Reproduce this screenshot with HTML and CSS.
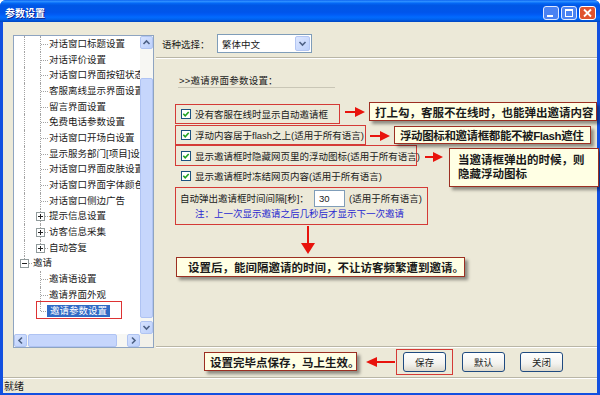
FILE: index.html
```html
<!DOCTYPE html>
<html lang="zh-CN">
<head>
    <meta charset="UTF-8">
    <title>参数设置</title>
    <link rel="stylesheet" href="styles.css">
</head>
<body>
    <div class="window">
        <div class="titlebar">
            <span class="title">参数设置</span>
            <div class="caption-btns">
                <svg width="16" height="14" viewBox="0 0 16 14"><rect x="0.5" y="0.5" width="15" height="13" rx="2.5" fill="#4a82f2" stroke="#dfe8ff"/><rect x="4" y="9" width="6" height="2" fill="#fff"/></svg>
                <svg width="16" height="14" viewBox="0 0 16 14"><rect x="0.5" y="0.5" width="15" height="13" rx="2.5" fill="#4a82f2" stroke="#dfe8ff"/><rect x="4.5" y="3.5" width="7" height="7" fill="none" stroke="#fff"/><rect x="4" y="3" width="8" height="2" fill="#fff"/></svg>
                <svg width="17" height="14" viewBox="0 0 17 14"><rect x="0.5" y="0.5" width="16" height="13" rx="2.5" fill="#e0532f" stroke="#fff"/><path d="M5 3.5 L12 10.5 M12 3.5 L5 10.5" stroke="#fff" stroke-width="1.8"/></svg>
            </div>
        </div>

        <div class="client">
            <div class="main">
                <!-- left tree -->
                <div class="tree-panel">
                    <div class="tree-view">
                        <div class="row"><span class="g pipe"></span><span class="g tee"></span><span class="label">对话窗口标题设置</span></div>
                        <div class="row"><span class="g pipe"></span><span class="g tee"></span><span class="label">对话评价设置</span></div>
                        <div class="row"><span class="g pipe"></span><span class="g tee"></span><span class="label">对话窗口界面按钮状态</span></div>
                        <div class="row"><span class="g pipe"></span><span class="g tee"></span><span class="label">客服离线显示界面设置</span></div>
                        <div class="row"><span class="g pipe"></span><span class="g tee"></span><span class="label">留言界面设置</span></div>
                        <div class="row"><span class="g pipe"></span><span class="g tee"></span><span class="label">免费电话参数设置</span></div>
                        <div class="row"><span class="g pipe"></span><span class="g tee"></span><span class="label">对话窗口开场白设置</span></div>
                        <div class="row"><span class="g pipe"></span><span class="g tee"></span><span class="label">显示服务部门[项目]设置</span></div>
                        <div class="row"><span class="g pipe"></span><span class="g tee"></span><span class="label">对话窗口界面皮肤设置</span></div>
                        <div class="row"><span class="g pipe"></span><span class="g tee"></span><span class="label">对话窗口界面字体颜色</span></div>
                        <div class="row"><span class="g pipe"></span><span class="g tee"></span><span class="label">对话窗口侧边广告</span></div>
                        <div class="row"><span class="g pipe"></span><span class="g tee"><span class="exp plus"></span></span><span class="label">提示信息设置</span></div>
                        <div class="row"><span class="g pipe"></span><span class="g tee"><span class="exp plus"></span></span><span class="label">访客信息采集</span></div>
                        <div class="row"><span class="g pipe"></span><span class="g elbow"><span class="exp plus"></span></span><span class="label">自动答复</span></div>
                        <div class="row"><span class="g elbow"><span class="exp"></span></span><span class="label">邀请</span></div>
                        <div class="row"><span class="g"></span><span class="g tee"></span><span class="label">邀请语设置</span></div>
                        <div class="row"><span class="g"></span><span class="g tee"></span><span class="label">邀请界面外观</span></div>
                        <div class="row"><span class="g"></span><span class="g elbow"></span><span class="label selected">邀请参数设置</span></div>
                    </div>
                    <div class="vscroll">
                        <span class="sb-btn"><svg width="9" height="9" viewBox="0 0 9 9"><path d="M1.5 6 L4.5 3 L7.5 6" fill="none" stroke="#4d6185" stroke-width="1.6"/></svg></span>
                        <div class="v-track"><span class="thumb"></span></div>
                        <span class="sb-btn"><svg width="9" height="9" viewBox="0 0 9 9"><path d="M1.5 3 L4.5 6 L7.5 3" fill="none" stroke="#4d6185" stroke-width="1.6"/></svg></span>
                    </div>
                    <div class="hscroll">
                        <span class="sb-btn"><svg width="9" height="9" viewBox="0 0 9 9"><path d="M6 1.5 L3 4.5 L6 7.5" fill="none" stroke="#4d6185" stroke-width="1.6"/></svg></span>
                        <div class="h-track"><span class="thumb"></span></div>
                        <span class="sb-btn"><svg width="9" height="9" viewBox="0 0 9 9"><path d="M3 1.5 L6 4.5 L3 7.5" fill="none" stroke="#4d6185" stroke-width="1.6"/></svg></span>
                    </div>
                    <div class="sb-corner"></div>
                </div>

                <!-- right settings -->
                <div class="settings">
                    <div class="lang-row">
                        <span class="lang-label">语种选择：</span>
                        <div class="select">
                            <span>繁体中文</span>
                            <span class="drop"><svg width="9" height="9" viewBox="0 0 9 9"><path d="M1.5 3 L4.5 6 L7.5 3" fill="none" stroke="#4d6185" stroke-width="1.6"/></svg></span>
                        </div>
                    </div>

                    <div class="panel-body">
                        <div class="section-title">&gt;&gt;邀请界面参数设置：</div>
                        <div class="options">
                            <div class="opt marked w1">
                                <svg class="check" viewBox="0 0 10 10"><rect x="0.5" y="0.5" width="9" height="9" fill="#fff" stroke="#1c5180"/><path d="M2.3 4.8 L4.2 6.8 L7.7 3" fill="none" stroke="#21a121" stroke-width="1.6"/></svg>
                                <span>没有客服在线时显示自动邀请框</span>
                            </div>
                            <div class="opt marked w2">
                                <svg class="check" viewBox="0 0 10 10"><rect x="0.5" y="0.5" width="9" height="9" fill="#fff" stroke="#1c5180"/><path d="M2.3 4.8 L4.2 6.8 L7.7 3" fill="none" stroke="#21a121" stroke-width="1.6"/></svg>
                                <span>浮动内容居于flash之上(适用于所有语言)</span>
                            </div>
                            <div class="opt marked w3">
                                <svg class="check" viewBox="0 0 10 10"><rect x="0.5" y="0.5" width="9" height="9" fill="#fff" stroke="#1c5180"/><path d="M2.3 4.8 L4.2 6.8 L7.7 3" fill="none" stroke="#21a121" stroke-width="1.6"/></svg>
                                <span>显示邀请框时隐藏网页里的浮动图标(适用于所有语言)</span>
                            </div>
                            <div class="opt">
                                <svg class="check" viewBox="0 0 10 10"><rect x="0.5" y="0.5" width="9" height="9" fill="#fff" stroke="#1c5180"/><path d="M2.3 4.8 L4.2 6.8 L7.7 3" fill="none" stroke="#21a121" stroke-width="1.6"/></svg>
                                <span>显示邀请框时冻结网页内容(适用于所有语言)</span>
                            </div>
                            <div class="opt marked interval">
                                <div class="interval-line">
                                    <span class="interval-label">自动弹出邀请框时间间隔[秒]：</span>
                                    <span class="num-input">30</span>
                                    <span class="hint">(适用于所有语言)</span>
                                </div>
                                <div class="note">注：上一次显示邀请之后几秒后才显示下一次邀请</div>
                            </div>
                        </div>
                    </div>

                    <div class="button-bar">
                        <span class="btn-mark"><button class="btn">保存</button></span>
                        <button class="btn btn-default">默认</button>
                        <button class="btn btn-close">关闭</button>
                    </div>
                </div>
            </div>
            <div class="statusbar">就绪</div>
        </div>

        <!-- annotations -->
        <span class="arrow right a1"></span>
        <span class="arrow right a2"></span>
        <span class="arrow right a3"></span>
        <span class="arrow down a4"></span>
        <span class="arrow left a5"></span>

        <div class="callout c1">打上勾，客服不在线时，也能弹出邀请内容</div>
        <div class="callout c2">浮动图标和邀请框都能不被Flash遮住</div>
        <div class="callout c3">当邀请框弹出的时候，则<br>隐藏浮动图标</div>
        <div class="callout c4">设置后，能间隔邀请的时间，不让访客频繁遭到邀请。</div>
        <div class="callout c5">设置完毕点保存，马上生效。</div>
    </div>
</body>
</html>
```

FILE: styles.css
```css
/* Global */
* {
    margin: 0;
    padding: 0;
    box-sizing: border-box;
}

body {
    font-family: "Liberation Sans", "Noto Sans CJK SC", sans-serif;
    font-size: 9.5px;
    color: #1a1a1a;
    background: #fff;
}

/* Window frame */
.window {
    position: relative;
    width: 600px;
    height: 395px;
    display: flex;
    flex-direction: column;
    background: #1250e0;
    border-radius: 6px 6px 0 0;
    overflow: hidden;
}

.titlebar {
    height: 22px;
    flex: none;
    display: flex;
    align-items: center;
    justify-content: space-between;
    padding: 3px 4px 0 5px;
    background: linear-gradient(180deg, #0058ee 0%, #3593ff 5%, #1e85ff 9%, #0467f5 15%, #0057e5 24%, #0055eb 56%, #005bf5 66%, #026afe 78%, #0062ef 88%, #0052d6 94%, #0045c0 100%);
}

.title {
    color: #fff;
    font-weight: bold;
    font-size: 10px;
    text-shadow: 1px 1px #0f1f89;
}

.caption-btns {
    display: flex;
    gap: 2px;
}

.client {
    flex: 1;
    margin: 0 3px 2px;
    background: #ece9d8;
    display: flex;
    flex-direction: column;
}

.main {
    flex: 1;
    display: flex;
}

/* Tree */
.tree-panel {
    margin: 13px 0 0 10px;
    width: 141px;
    height: 313px;
    border: 1px solid #8ea4c1;
    background: #fff;
    display: grid;
    grid-template-columns: 1fr 13px;
    grid-template-rows: 1fr 13px;
}

.tree-view {
    overflow: hidden;
    padding-left: 2px;
}

.row {
    display: flex;
    align-items: center;
    height: 15.7px;
    white-space: nowrap;
}

.g {
    position: relative;
    width: 16px;
    height: 100%;
    flex: none;
}

.g.pipe::before,
.g.tee::before {
    content: '';
    position: absolute;
    left: 8px;
    top: 0;
    bottom: 0;
    border-left: 1px dotted #a3a3a3;
}

.g.elbow::before {
    content: '';
    position: absolute;
    left: 8px;
    top: 0;
    height: 50%;
    border-left: 1px dotted #a3a3a3;
}

.g.tee::after,
.g.elbow::after {
    content: '';
    position: absolute;
    left: 9px;
    right: 0;
    top: 50%;
    border-top: 1px dotted #a3a3a3;
}

.exp {
    position: absolute;
    left: 4px;
    top: 50%;
    margin-top: -4px;
    width: 9px;
    height: 9px;
    border: 1px solid #919b9c;
    background: #fff;
    z-index: 1;
}

.exp::before {
    content: '';
    position: absolute;
    left: 1px;
    top: 3px;
    width: 5px;
    height: 1px;
    background: #222;
}

.exp.plus::after {
    content: '';
    position: absolute;
    left: 3px;
    top: 1px;
    width: 1px;
    height: 5px;
    background: #222;
}

.label {
    padding-left: 1px;
    line-height: 12px;
}

.label.selected {
    position: relative;
    background: #316ac5;
    color: #fff;
    padding: 0 3px;
    margin-left: -1px;
}

.label.selected::after {
    content: '';
    position: absolute;
    left: -11px;
    right: -12px;
    top: -4px;
    bottom: -2px;
    border: 1px solid #d33;
}

/* Scrollbars */
.vscroll {
    display: flex;
    flex-direction: column;
    background: #f7f7f3;
}

.hscroll {
    display: flex;
    background: #f7f7f3;
}

.sb-btn {
    width: 13px;
    height: 13px;
    flex: none;
    display: flex;
    align-items: center;
    justify-content: center;
    background: linear-gradient(135deg, #d6e2fe, #bcd0fb);
    border: 1px solid #b0c4f2;
    border-radius: 2px;
}

.v-track {
    flex: 1;
    display: flex;
    padding: 29px 0 3px;
}

.h-track {
    flex: 1;
    display: flex;
    padding: 0 10px 0 1px;
}

.thumb {
    flex: 1;
    background: #c6d6fc;
    border: 1px solid #afc3f3;
    border-radius: 2px;
}

.sb-corner {
    background: #f2f1ea;
}

/* Settings side */
.settings {
    flex: 1;
    margin-left: 2px;
    display: flex;
    flex-direction: column;
}

.lang-row {
    height: 36px;
    flex: none;
    display: flex;
    align-items: center;
    padding: 8px 0 0 6px;
    border-bottom: 1px solid #b9b6a6;
    box-shadow: 0 1px #fff;
}

.lang-label {
    width: 55px;
}

.select {
    width: 95px;
    height: 19px;
    border: 1px solid #7f9db9;
    background: #fff;
    display: flex;
    align-items: center;
    justify-content: space-between;
    padding-left: 4px;
}

.drop {
    width: 15px;
    height: 15px;
    margin-right: 1px;
    display: flex;
    align-items: center;
    justify-content: center;
    background: linear-gradient(135deg, #dde7ff, #bcd0fb);
    border: 1px solid #b3c6f3;
    border-radius: 2px;
}

.panel-body {
    flex: 1;
    padding-left: 22px;
}

.section-title {
    margin-top: 16px;
    width: 157px;
    height: 14px;
    line-height: 13px;
    padding-left: 1px;
    border-bottom: 1px solid #c9c6b6;
    letter-spacing: 0.2px;
}

.options {
    display: flex;
    flex-direction: column;
    align-items: flex-start;
    margin: 16px 0 0 -3px;
}

.opt {
    display: flex;
    align-items: center;
    height: 20px;
    padding-left: 5px;
    border: 1px solid transparent;
    white-space: nowrap;
}

.opt.marked {
    border-color: #d43a36;
}

.opt.w1 { width: 165px; }
.opt.w2 { width: 191px; margin-top: 1px; }
.opt.w3 { width: 242px; height: 21px; }

.check {
    width: 10px;
    height: 10px;
    margin-right: 4px;
    flex: none;
}

.opt.interval {
    width: 253px;
    height: 38px;
    margin-top: 1px;
    padding: 1px 0 0 4px;
    flex-direction: column;
    align-items: flex-start;
}

.interval-line {
    display: flex;
    align-items: center;
    height: 18px;
}

.interval-label {
    width: 134px;
}

.num-input {
    width: 31px;
    height: 17px;
    border: 1px solid #7f9db9;
    background: #fff;
    padding-left: 4px;
    line-height: 15px;
}

.hint {
    margin-left: 4px;
}

.note {
    height: 14px;
    line-height: 14px;
    padding-left: 15px;
    color: #2b2bd0;
}

/* Buttons */
.button-bar {
    height: 31px;
    flex: none;
    display: flex;
    align-items: center;
    justify-content: flex-end;
    padding-right: 34px;
    border-top: 1px solid #b9b6a6;
    box-shadow: inset 0 1px #fff;
}

.btn {
    width: 43px;
    height: 20px;
    font: inherit;
    color: #222;
    border: 1px solid #1f4a80;
    border-radius: 3px;
    background: linear-gradient(180deg, #fff 0%, #f3f2ee 60%, #dcd8cc 100%);
}

.btn-mark {
    display: flex;
    border: 1px solid #d43a36;
    padding: 2px 6px;
}

.btn-default { margin-left: 9px; }
.btn-close { margin-left: 15px; }

.statusbar {
    height: 16px;
    flex: none;
    display: flex;
    align-items: center;
    padding-left: 1px;
    font-size: 10px;
    border-top: 1px solid #b9b6a6;
    box-shadow: inset 0 1px #fff;
}

/* Annotations */
.arrow {
    position: absolute;
    height: 2px;
    background: #e8130c;
}

.arrow::after {
    content: '';
    position: absolute;
    top: -4px;
    border-top: 5px solid transparent;
    border-bottom: 5px solid transparent;
}

.arrow.right::after {
    left: 100%;
    border-left: 10px solid #e8130c;
}

.arrow.left::after {
    right: 100%;
    border-right: 11px solid #e8130c;
}

.arrow.down {
    width: 2px;
}

.arrow.down::after {
    top: 100%;
    left: -6px;
    border-top: 11px solid #e8130c;
    border-left: 7px solid transparent;
    border-right: 7px solid transparent;
    border-bottom: 0;
}

.a1 { left: 345px; top: 111px; width: 10px; }
.a2 { left: 370px; top: 135px; width: 10px; }
.a3 { left: 425px; top: 156px; width: 8px; }
.a4 { left: 307px; top: 226px; height: 17px; }
.a5 { left: 377px; top: 361px; width: 18px; }

.callout {
    position: absolute;
    display: flex;
    align-items: center;
    background: #ffffe4;
    border: 1px solid #9c2f22;
    box-shadow: 3px 3px 3px rgba(0, 0, 0, 0.4);
    font-size: 11.5px;
    font-weight: bold;
    color: #1a1a1a;
    white-space: nowrap;
}

.c1 { left: 369px; top: 102px; width: 228px; height: 19px; padding-left: 5px; }
.c2 { left: 394px; top: 126px; width: 197px; height: 18px; padding-left: 5px; letter-spacing: -0.4px; }
.c3 { left: 449px; top: 148px; width: 150px; height: 39px; padding-left: 8px; line-height: 13.5px; }
.c4 { left: 176px; top: 257px; width: 289px; height: 20px; padding-left: 11px; }
.c5 { left: 204px; top: 352px; width: 153px; height: 19px; padding-left: 5px; }
```
